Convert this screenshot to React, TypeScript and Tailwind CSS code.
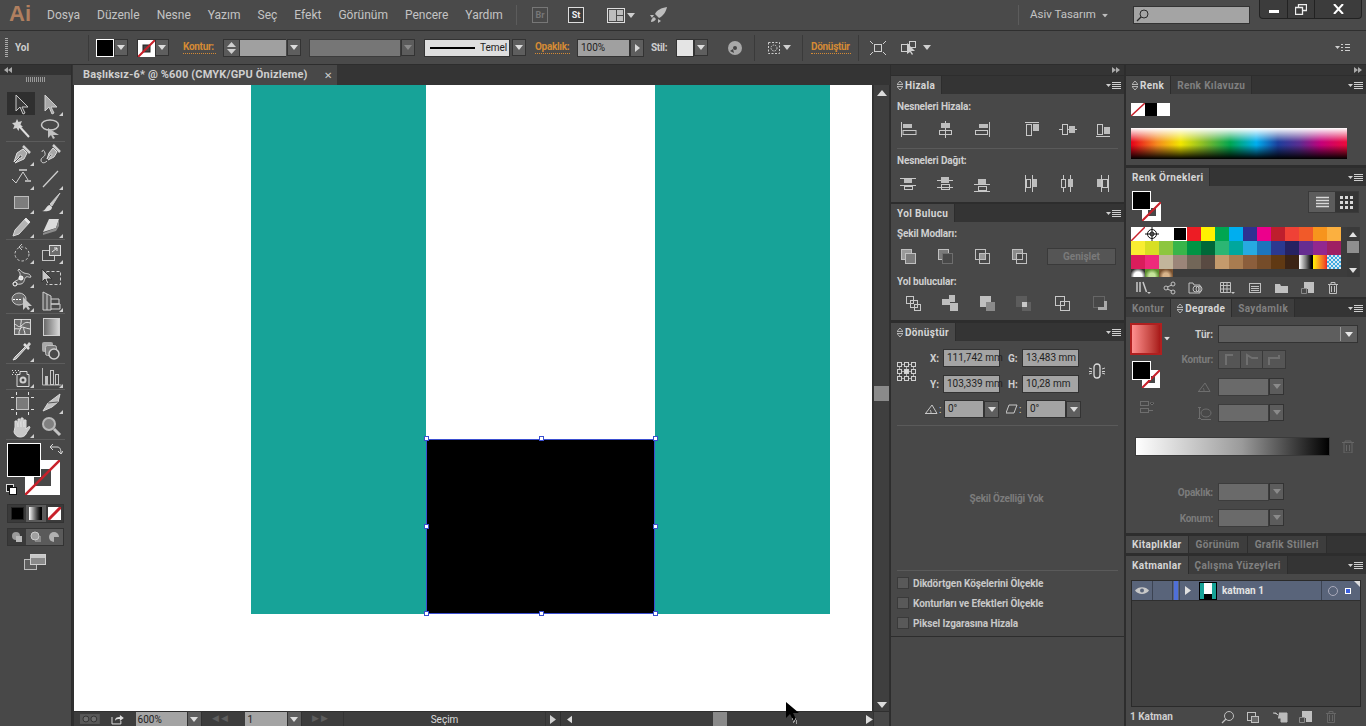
import React from 'react'

const Ico = ({
  w = 24,
  h = 24,
  c = '#c4c4c4',
  className = '',
  children,
}: {
  w?: number
  h?: number
  c?: string
  className?: string
  children?: React.ReactNode
}) => (
  <svg
    width={w}
    height={h}
    viewBox={`0 0 ${w} ${h}`}
    fill="none"
    stroke={c}
    strokeWidth={1}
    className={`block shrink-0 ${className}`}
  >
    {children}
  </svg>
)

const Caret = ({ c = '#d8d8d8', className = '' }: { c?: string; className?: string }) => (
  <svg width="8" height="5" viewBox="0 0 8 5" className={`block shrink-0 ${className}`}>
    <path d="M0 0h8L4 5z" fill={c} />
  </svg>
)

const PanelMenu = () => (
  <svg width="15" height="9" viewBox="0 0 15 9" className="block shrink-0">
    <path d="M0 3h5L2.500 6z" fill="#cfcfcf" />
    <path d="M6 1.500h9M6 3.500h9M6 5.500h9M6 7.500h9" stroke="#cfcfcf" strokeWidth="1" />
  </svg>
)

const Dd = ({ wide = 'w-[14px]', dim = false, cls = '' }: { wide?: string; dim?: boolean; cls?: string }) => (
  <div
    className={`${wide} ${cls} h-[17px] flex items-center justify-center border border-[#333] ${
      dim ? 'bg-[#5c5c5c]' : 'bg-[#5e5e5e]'
    }`}
  >
    <Caret c={dim ? '#8a8a8a' : '#dcdcdc'} />
  </div>
)

const NoStroke = ({ inner = true }: { inner?: boolean }) => (
  <svg width="17" height="17" viewBox="0 0 17 17" className="block">
    <rect x="0" y="0" width="17" height="17" fill="#fff" />
    {inner && <rect x="5" y="5" width="7" height="7" fill="#484848" stroke="#222" />}
    <path d="M0 17L17 0" stroke="#c8202a" strokeWidth="2" />
  </svg>
)

const ToolSep = () => <div className="mx-[6px] h-px bg-[#5c5c5c] mb-[1px]" />

const Corner = () => <path d="M24 23h-4l4-4z" fill="#cfcfcf" stroke="none" />

const tools: React.ReactNode[][] = [
  [
    <>
      <path d="M6 2v16l4-4 3 7 2-1-3-6h6z" fill="#3a3a3a" stroke="#c8c8c8" />
    </>,
    <>
      <path d="M6 2v16l4-4 3 7 2-1-3-6h6z" fill="#a8a8a8" stroke="#cfcfcf" />
      <Corner />
    </>,
  ],
  [
    <>
      <path d="M7 2l1.500 3 3.500-1-1.500 3.500 2.500 2.500-3.500 .5-1 3.500-2-3-3.500 1 1.500-3.500-2.500-2.500 3.500-.5z" fill="#d0d0d0" stroke="none" />
      <path d="M9 9l10 11" stroke="#dedede" strokeWidth="2" />
    </>,
    <>
      <ellipse cx="11" cy="8" rx="8.500" ry="5" stroke="#c8c8c8" strokeWidth="1.500" />
      <path d="M9 11v10l3-3 2 4 2-1-2-3h6z" fill="#c0c0c0" stroke="none" />
    </>,
  ],
  [
    <>
      <path d="M13 6l4 4-3 6-9 4 5-5a1.500 1.500 0 1 0-1-1l-5 5 3-9z" fill="#a8a8a8" stroke="#dcdcdc" />
      <path d="M13 3l7 7" stroke="#cfcfcf" strokeWidth="2.500" />
      <Corner />
    </>,
    <>
      <path d="M14 5l4 4-3 5-6 3 3-4a1 1 0 1 0-1-1l-3 4 2-6z" fill="#a8a8a8" stroke="#dcdcdc" />
      <path d="M14 2l7 7" stroke="#cfcfcf" strokeWidth="2.500" />
      <path d="M8 18c-3 3-6 2-6-1s5-3 4-7-3-3-3-1" stroke="#cfcfcf" />
    </>,
  ],
  [
    <>
      <path d="M2 12l4 4 7-11 5 8" stroke="#d0d0d0" />
      <path d="M9 3h8M15 14h6" stroke="#d0d0d0" strokeWidth="1.500" />
      <Corner />
    </>,
    <>
      <path d="M4 20L19 4" stroke="#cfcfcf" strokeWidth="1.200" />
      <Corner />
    </>,
  ],
  [
    <>
      <rect x="4.500" y="5.500" width="14" height="12" fill="#7d7d7d" stroke="#bcbcbc" />
      <Corner />
    </>,
    <>
      <path d="M21 2L11 13l2 2z" fill="#c8c8c8" stroke="#c8c8c8" />
      <path d="M3 20c4 0 4-6 8-6l2 2c0 4-5 5-10 4z" fill="#dcdcdc" stroke="none" />
      <Corner />
    </>,
  ],
  [
    <>
      <path d="M16 3l4 4-11 12-6 2 2-6z" fill="#b4b4b4" stroke="#d8d8d8" />
      <path d="M15 4l4 4" stroke="#e8e8e8" strokeWidth="2" />
      <Corner />
    </>,
    <>
      <path d="M10 4h10l-3 9-13 4z" fill="#dcdcdc" stroke="none" />
      <path d="M4 18l13-5 3-9v7l-3 5-13 4z" fill="#8c8c8c" stroke="none" />
      <Corner />
    </>,
  ],
  [
    <>
      <circle cx="12" cy="13" r="7" strokeDasharray="2.500 2" stroke="#c8c8c8" />
      <path d="M12 3l-3 3 3 3" stroke="#c8c8c8" />
      <Corner />
    </>,
    <>
      <rect x="3.500" y="9.500" width="12" height="10" stroke="#c4c4c4" />
      <rect x="10.500" y="4.500" width="11" height="10" fill="#6c6c6c" stroke="#dcdcdc" />
      <path d="M13 11l5-4M15 7h3v3" stroke="#e8e8e8" />
      <Corner />
    </>,
  ],
  [
    <>
      <path d="M3 19c2-5 6-2 7-8s-4-4-1-7c2 2 3 3 5 4 3 1 6 0 7 4-2 1-3-1-5 0s-1 6-5 7-5-1-8 0z" fill="#5a5a5a" stroke="#d0d0d0" />
      <circle cx="5" cy="19" r="2" fill="#484848" stroke="#fff" />
      <circle cx="11" cy="13" r="2" fill="#dcdcdc" stroke="#fff" />
      <Corner />
    </>,
    <>
      <rect x="7.500" y="6.500" width="14" height="13" stroke="#d0d0d0" strokeDasharray="3 2" />
      <path d="M3 4v13l3-3 2 5 2-1-2-4h5z" fill="#c8c8c8" stroke="#333" />
    </>,
  ],
  [
    <>
      <ellipse cx="9" cy="10" rx="7" ry="6" stroke="#c8c8c8" fill="#6a6a6a" />
      <path d="M3 10.500h9" stroke="#fff" strokeDasharray="2 1" />
      <path d="M13 8v13l3-3 2 3 2-1-2-3h4z" fill="#c8c8c8" stroke="none" />
      <Corner />
    </>,
    <>
      <path d="M4 3l8 4v14H4z" fill="#5e5e5e" stroke="#d0d0d0" />
      <path d="M8 5v16M12 10h8v5h-8M12 15h9v5h-9" stroke="#d0d0d0" />
      <Corner />
    </>,
  ],
  [
    <>
      <rect x="4.500" y="4.500" width="16" height="15" fill="#6a6a6a" stroke="#d4d4d4" />
      <path d="M4 9c4 1 4 4 7 2s4-5 9-3M11 4c1 3-1 5 0 7s-3 5-2 8M4 14c3-1 5 1 7-1s3 0 9 1M15 19c0-3-2-4-1-7" stroke="#e4e4e4" />
    </>,
    <>
      <defs>
        <linearGradient id="tg" x1="0" x2="1" y1="0" y2="0">
          <stop offset="0" stopColor="#666" />
          <stop offset="1" stopColor="#dadada" />
        </linearGradient>
      </defs>
      <rect x="4.500" y="3.500" width="16" height="17" fill="url(#tg)" stroke="#d0d0d0" />
    </>,
  ],
]

const toolsEnd: React.ReactNode[][] = [
  [
    <>
      <path d="M15 8L5 18l-2 3 3-1 10-11" fill="#b0b0b0" stroke="#e0e0e0" />
      <path d="M14 5l5 5" stroke="#e0e0e0" strokeWidth="2.500" />
      <path d="M16 7l3-4 2 2-3 4z" fill="#d0d0d0" stroke="none" />
      <Corner />
    </>,
    <>
      <rect x="3" y="3" width="11" height="10" rx="2" fill="#a8a8a8" stroke="none" />
      <rect x="6.500" y="6.500" width="11" height="10" rx="2" fill="#7a7a7a" stroke="#c0c0c0" />
      <circle cx="15" cy="15" r="5" fill="#4a4a4a" stroke="#d0d0d0" strokeWidth="1.500" />
    </>,
  ],
  [
    <>
      <path d="M2 5.500h1M5 5.500h1M8 5.500h1M3 7.500h1M6 7.500h1M2 9.500h1M5 9.500h1" stroke="#dcdcdc" />
      <path d="M10 6.500h7v3h2v12H7v-12h3z" fill="#4c4c4c" stroke="#d8d8d8" />
      <circle cx="13" cy="15" r="3.500" fill="#cfcfcf" stroke="none" />
      <circle cx="13" cy="15" r="1.500" fill="#444" stroke="none" />
      <Corner />
    </>,
    <>
      <path d="M3.500 3v17h19" stroke="#b8b8b8" />
      <rect x="6" y="11" width="3" height="9" fill="#c0c0c0" stroke="none" />
      <rect x="11.500" y="5.500" width="3" height="14" stroke="#c8c8c8" />
      <rect x="16.500" y="9.500" width="3" height="10" stroke="#c8c8c8" />
      <Corner />
    </>,
  ],
]

const toolsLast: React.ReactNode[][] = [
  [
    <>
      <rect x="6.500" y="6.500" width="12" height="12" fill="#7a7a7a" stroke="#c4c4c4" />
      <path d="M6.500 1v3M18.500 1v3M6.500 21v3M18.500 21v3M1 6.500h3M1 18.500h3M21 6.500h3M21 18.500h3" stroke="#e0e0e0" />
    </>,
    <>
      <path d="M21 3L9 12l-5 8 9-4 6-5z" fill="#c0c0c0" stroke="#d8d8d8" />
      <path d="M9 12l10-1" stroke="#555" />
      <Corner />
    </>,
  ],
  [
    <>
      <path d="M5 12V6l2 0 1 6V4h2l1 8V3h2l1 9V5h2v9c2-2 3-3 4-2 0 2-3 4-4 7-1 2-3 3-6 3-3 0-5-2-6-5z" fill="#c8c8c8" stroke="#dedede" />
      <Corner />
    </>,
    <>
      <circle cx="10" cy="9" r="6" fill="#808080" stroke="#b8b8b8" strokeWidth="2" />
      <path d="M15 14l6 6" stroke="#c4c4c4" strokeWidth="3" />
    </>,
  ],
]

const ToolRow = ({ icons, active = false }: { icons: React.ReactNode[]; active?: boolean }) => (
  <div className="flex h-[24px] pl-[10px]">
    <div className="w-[31px] -ml-[2px] pl-[2px] relative">
      {active && <div className="absolute -left-[1px] -top-[1px] w-[28px] h-[23px] bg-[#2f2f2f]" />}
      <Ico className="relative">{icons[0]}</Ico>
    </div>
    <Ico>{icons[1]}</Ico>
  </div>
)

const LeftTools = () => (
  <div className="w-[72px] shrink-0 bg-[#484848] border-r border-[#2d2d2d] flex flex-col">
    <div className="h-[10px] bg-[#333] flex items-center pl-[4px]">
      <svg width="8" height="6" viewBox="0 0 8 6">
        <path d="M4 0v6L0 3zM8 0v6L4 3z" fill="#aaa" />
      </svg>
    </div>
    <div className="h-[9px] flex items-center justify-center">
      <div className="w-[20px] h-[5px] bg-[repeating-linear-gradient(90deg,#9a9a9a_0,#9a9a9a_1px,transparent_1px,transparent_2px)]" />
    </div>
    <div className="h-[9px]" />
    <ToolRow icons={tools[0]} active />
    <ToolRow icons={tools[1]} />
    <ToolSep />
    <ToolRow icons={tools[2]} />
    <ToolRow icons={tools[3]} />
    <ToolRow icons={tools[4]} />
    <ToolRow icons={tools[5]} />
    <ToolSep />
    <ToolRow icons={tools[6]} />
    <ToolRow icons={tools[7]} />
    <ToolRow icons={tools[8]} />
    <ToolSep />
    <ToolRow icons={tools[9]} />
    <ToolRow icons={toolsEnd[0]} />
    <ToolSep />
    <ToolRow icons={toolsEnd[1]} />
    <ToolSep />
    <ToolRow icons={toolsLast[0]} />
    <ToolRow icons={toolsLast[1]} />
    <ToolSep />

    <div className="relative h-[58px]">
      <div className="absolute left-[25px] top-[19px] w-[35px] h-[35px]">
        <svg width="35" height="35" viewBox="0 0 35 35" className="block">
          <rect width="35" height="35" fill="#fff" />
          <rect x="9" y="9" width="17" height="17" fill="#484848" />
          <path d="M0 35L35 0" stroke="#c8202a" strokeWidth="2.500" />
        </svg>
      </div>
      <div className="absolute left-[7px] top-[2px] w-[34px] h-[34px] bg-black border border-white" />
      <svg width="14" height="14" viewBox="0 0 14 14" className="absolute left-[49px] top-[2px]">
        <path d="M1 4h7c3 0 4 2 4 7M1 4l3-3M1 4l3 3M12 11l-3-3M12 11l2-3" fill="none" stroke="#d8d8d8" />
      </svg>
      <svg width="11" height="11" viewBox="0 0 11 11" className="absolute left-[6px] top-[43px]">
        <rect x="0.500" y="0.500" width="7" height="7" fill="#111" stroke="#ddd" />
        <rect x="3.500" y="3.500" width="7" height="7" fill="#fff" stroke="#111" />
      </svg>
    </div>

    <div className="mx-[7px] mt-[5px] h-[19px] flex items-center bg-[#3a3a3a] border border-[#333]">
      <div className="w-[19px] h-full flex items-center justify-center">
        <div className="w-[13px] h-[13px] bg-black border border-[#222]" />
      </div>
      <div className="w-[20px] h-full flex items-center justify-center bg-[#5a5a5a]">
        <div className="w-[13px] h-[13px] bg-linear-to-r from-white to-black" />
      </div>
      <div className="w-[18px] h-full flex items-center justify-center">
        <svg width="13" height="13" viewBox="0 0 13 13">
          <rect width="13" height="13" fill="#fff" />
          <path d="M0 13L13 0" stroke="#c8202a" strokeWidth="3" />
        </svg>
      </div>
    </div>
    <div className="mx-[7px] mt-[5px] h-[18px] flex items-center bg-[#5a5a5a] border border-[#333]">
      <div className="w-[19px] h-full flex items-center justify-center bg-[#3a3a3a]">
        <svg width="12" height="12" viewBox="0 0 12 12">
          <circle cx="5" cy="5" r="4" fill="#9a9a9a" />
          <rect x="5" y="5" width="6" height="6" fill="#b8b8b8" />
        </svg>
      </div>
      <div className="w-[20px] h-full flex items-center justify-center">
        <svg width="12" height="12" viewBox="0 0 12 12">
          <rect x="5" y="5" width="6" height="6" fill="#888" />
          <circle cx="5" cy="5" r="4" fill="#a0a0a0" stroke="#ccc" />
        </svg>
      </div>
      <div className="w-[18px] h-full flex items-center justify-center">
        <svg width="12" height="12" viewBox="0 0 12 12">
          <circle cx="6" cy="6" r="5" fill="#b0b0b0" />
          <rect x="6" y="6" width="5" height="5" fill="#5a5a5a" />
        </svg>
      </div>
    </div>
    <div className="flex justify-center mt-[7px] -ml-[2px]">
      <svg width="24" height="17" viewBox="0 0 24 17">
        <rect x="1.500" y="6.500" width="12" height="10" fill="#5e5e5e" stroke="#bdbdbd" />
        <rect x="7.500" y="1.500" width="15" height="10" fill="#8a8a8a" stroke="#d0d0d0" />
        <rect x="8" y="2" width="14" height="3" fill="#c8c8c8" stroke="none" />
      </svg>
    </div>
  </div>
)

const MenuBar = () => (
  <div className="h-[31px] shrink-0 flex items-center bg-[#4a4a4a] border-b border-[#2f2f2f] text-[12px] text-[#c4c4c4]">
    <div className="ml-[9px] w-[38px] text-[22px] leading-none font-bold text-[#b07f5f] font-['Liberation_Sans',sans-serif] -mt-[2px]">
      Ai
    </div>
    <div className="flex gap-[17px] w-[469px]">
      <span>Dosya</span>
      <span>Düzenle</span>
      <span>Nesne</span>
      <span>Yazım</span>
      <span>Seç</span>
      <span>Efekt</span>
      <span>Görünüm</span>
      <span>Pencere</span>
      <span>Yardım</span>
    </div>
    <div className="w-px h-[20px] bg-[#5c5c5c]" />
    <div className="ml-[15px] w-[16px] h-[16px] border border-[#777] text-[9px] leading-[14px] text-center text-[#777] font-bold">
      Br
    </div>
    <div className="ml-[20px] w-[16px] h-[16px] border border-[#ddd] text-[9px] leading-[14px] text-center text-[#eee] font-bold bg-[#3c3c3c]">
      St
    </div>
    <svg width="18" height="15" viewBox="0 0 18 15" className="ml-[23px] block">
      <rect x="0.500" y="0.500" width="17" height="14" fill="#484848" stroke="#ddd" />
      <rect x="2" y="2" width="7" height="11" fill="#bdbdbd" />
      <rect x="10" y="2" width="6" height="5" fill="#bdbdbd" />
      <rect x="10" y="8" width="6" height="5" fill="#bdbdbd" />
    </svg>
    <Caret className="ml-[2px]" c="#cfcfcf" />
    <svg width="18" height="18" viewBox="0 0 18 18" className="ml-[15px] block">
      <path d="M17 1C11 2 7 4 5 8l4 4c4-2 7-6 8-11zM4 9L0 9l2 3zM8 13l0 4 3-2zM4 11c-2 1-3 3-3 5 2 0 4-1 5-3z" fill="#bdbdbd" />
    </svg>
    <div className="ml-auto flex items-center h-full">
      <div className="w-px h-[20px] bg-[#5c5c5c]" />
      <span className="ml-[11px] w-[62px] whitespace-nowrap text-[11.5px]">Asiv Tasarım</span>
      <Caret className="ml-[9px] scale-75" c="#bdbdbd" />
      <div className="ml-[24px] w-[117px] h-[18px] bg-[#a4a4a4] border border-[#333] flex items-center pl-[2px]">
        <svg width="13" height="13" viewBox="0 0 13 13">
          <circle cx="8" cy="5" r="4" fill="none" stroke="#2a2a2a" />
          <path d="M5 8l-4 4" stroke="#2a2a2a" strokeWidth="1.300" />
        </svg>
      </div>
      <div className="ml-[9px] mr-[4px] self-start w-[103px] h-[19px] flex bg-[#3c3c3c] border border-t-0 border-[#222] rounded-b-[4px]">
        <div className="w-[28px] flex items-center justify-center border-r border-[#222]">
          <div className="w-[10px] h-[3px] mt-[5px] bg-white" />
        </div>
        <div className="w-[27px] flex items-center justify-center border-r border-[#222]">
          <svg width="12" height="11" viewBox="0 0 12 11">
            <path d="M3.500 3V.5h8v6H8M.5 3.500h7v7h-7z" fill="none" stroke="#eee" strokeWidth="1.300" />
          </svg>
        </div>
        <div className="flex-1 flex items-center justify-center">
          <svg width="11" height="10" viewBox="0 0 11 10">
            <path d="M1 0l9 10M10 0L1 10" stroke="#fff" strokeWidth="2" />
          </svg>
        </div>
      </div>
    </div>
  </div>
)

const CtlSep = ({ cls }: { cls: string }) => <div className={`${cls} w-px h-[26px] bg-[#3a3a3a]`} />

const OrangeLabel = ({ cls, children }: { cls: string; children: React.ReactNode }) => (
  <span
    className={`${cls} text-[10px] leading-[12px] font-bold tracking-[-0.3px] whitespace-nowrap text-[#d58a35] border-b border-dotted border-[#d58a35]`}
  >
    {children}
  </span>
)

const ControlBar = () => (
  <div className="h-[34px] shrink-0 flex items-center bg-[#4a4a4a] border-b border-[#2d2d2d] text-[10px]">
    <div className="ml-[5px] w-[3px] h-[20px] bg-[repeating-linear-gradient(180deg,#aaa_0,#aaa_1px,transparent_1px,transparent_2px)]" />
    <span className="ml-[7px] w-[73px] font-bold text-[#cfcfcf]">Yol</span>
    <CtlSep cls="" />
    <div className="ml-[7px] w-[18px] h-[18px] bg-black border border-white" />
    <Dd />
    <div className="ml-[9px] w-[18px] h-[18px] border border-[#333]">
      <NoStroke />
    </div>
    <Dd />
    <OrangeLabel cls="ml-[14px] w-[33px]">Kontur:</OrangeLabel>
    <div className="ml-[7px] w-[17px] h-[18px] flex flex-col items-center justify-center gap-[2px] bg-[#5a5a5a] border border-[#333]">
      <svg width="9" height="5" viewBox="0 0 9 5"><path d="M0 5h9L4.500 0z" fill="#cfcfcf" /></svg>
      <svg width="9" height="5" viewBox="0 0 9 5"><path d="M0 0h9L4.500 5z" fill="#cfcfcf" /></svg>
    </div>
    <div className="w-[46px] h-[18px] bg-[#a0a0a0] border-y border-[#333]" />
    <Dd cls="ml-[1px]" />
    <div className="ml-[8px] w-[92px] h-[18px] bg-[#767676] border border-[#3c3c3c]" />
    <Dd wide="w-[14px]" dim />
    <div className="ml-[9px] w-[86px] h-[18px] bg-[#dedede] border border-[#333] flex items-center text-[10px] text-[#222] pl-[5px]">
      <div className="w-[45px] h-[2px] bg-black" />
      <span className="ml-[5px]">Temel</span>
    </div>
    <Dd cls="ml-[2px]" />
    <OrangeLabel cls="ml-[9px] w-[35px]">Opaklık:</OrangeLabel>
    <div className="ml-[7px] w-[53px] h-[18px] bg-[#a0a0a0] border border-[#333] text-[10px] leading-[16px] text-[#222] pl-[3px]">
      100%
    </div>
    <div className="w-[14px] h-[18px] bg-[#5e5e5e] border border-[#333] flex items-center justify-center">
      <svg width="5" height="8" viewBox="0 0 5 8"><path d="M0 0v8l5-4z" fill="#d8d8d8" /></svg>
    </div>
    <span className="ml-[7px] w-[20px] font-bold text-[#cfcfcf] tracking-[-0.3px]">Stil:</span>
    <div className="ml-[5px] w-[18px] h-[18px] bg-[#e4e4e4] border border-[#333]" />
    <Dd />
    <svg width="14" height="14" viewBox="0 0 14 14" className="ml-[20px] block">
      <circle cx="7" cy="7" r="7" fill="#a8a8a8" />
      <circle cx="7" cy="7" r="2" fill="#444" />
      <path d="M2 10l3-2 1 4z" fill="#444" />
    </svg>
    <CtlSep cls="ml-[12px]" />
    <svg width="14" height="14" viewBox="0 0 14 14" className="ml-[12px] block">
      <rect x="1.500" y="1.500" width="11" height="11" fill="none" stroke="#cfcfcf" strokeDasharray="2 1.500" />
      <circle cx="7" cy="7" r="3" fill="none" stroke="#cfcfcf" strokeDasharray="1.500 1" />
    </svg>
    <Caret className="ml-[2px]" c="#d0d0d0" />
    <CtlSep cls="ml-[11px]" />
    <OrangeLabel cls="ml-[8px] w-[40px]">Dönüştür</OrangeLabel>
    <CtlSep cls="ml-[7px]" />
    <svg width="16" height="14" viewBox="0 0 16 14" className="ml-[11px] block">
      <rect x="4.500" y="3.500" width="7" height="7" fill="none" stroke="#cfcfcf" />
      <path d="M0 0l3 3M16 0l-3 3M0 14l3-3M16 14l-3-3" stroke="#cfcfcf" />
    </svg>
    <svg width="17" height="15" viewBox="0 0 17 15" className="ml-[14px] block">
      <rect x="1.500" y="4.500" width="7" height="7" fill="none" stroke="#cfcfcf" />
      <rect x="9.500" y="1.500" width="6" height="6" fill="none" stroke="#cfcfcf" />
      <path d="M7 3v11l3-2 2 3 1-1-2-3h4z" fill="#cfcfcf" />
    </svg>
    <Caret className="ml-[6px]" c="#d0d0d0" />
    <div className="ml-auto mr-[16px]">
      <svg width="15" height="9" viewBox="0 0 15 9" className="block">
        <path d="M0 3h5L2.500 6z" fill="#cfcfcf" />
        <path d="M6 1.500h2M10 1.500h5M6 4.500h2M10 4.500h5M6 7.500h2M10 7.500h5" stroke="#cfcfcf" />
      </svg>
    </div>
  </div>
)

const Canvas = () => (
  <div className="relative flex-1 bg-white overflow-hidden">
    {/* artboard objects, coordinates are relative to the canvas */}
    <div className="absolute left-[177px] top-0 w-[175px] h-[529px] bg-[#17a398]" />
    <div className="absolute left-[581px] top-0 w-[175px] h-[529px] bg-[#17a398]" />
    <div className="absolute left-[352px] top-[354px] w-[229px] h-[175px] bg-black border border-[#3b4fd0]" />
    {[
      'left-[350px] top-[351px]',
      'left-[465px] top-[351px]',
      'left-[579px] top-[351px]',
      'left-[350px] top-[439px]',
      'left-[579px] top-[439px]',
      'left-[350px] top-[526px]',
      'left-[465px] top-[526px]',
      'left-[579px] top-[526px]',
    ].map((pos) => (
      <div key={pos} className={`absolute ${pos} w-[5px] h-[5px] bg-white border border-[#3b4fd0]`} />
    ))}
  </div>
)

const DocArea = () => (
  <div className="w-[818px] shrink-0 flex flex-col bg-[#2f2f2f] relative">
    <div className="h-[20px] flex bg-[#343434]">
      <div className="ml-[1px] w-[264px] bg-[#484848] flex items-center pl-[10px] text-[11px] font-bold text-[#cfcfcf] tracking-[0.15px] whitespace-nowrap">
        <span className="w-[238px] overflow-hidden">Başlıksız-6* @ %600 (CMYK/GPU Önizleme)</span>
        <span className="ml-[3px] text-[10px] font-normal text-[#ccc]">✕</span>
      </div>
    </div>
    <div className="flex-1 flex min-h-0">
      <div className="w-[2px] bg-[#2f2f2f]" />
      <div className="flex-1 flex flex-col min-w-0">
        <div className="flex-1 flex min-h-0">
          <Canvas />
          <div className="w-[16px] ml-[1px] bg-[#3f3f3f] border-l border-[#333] flex flex-col items-center">
            <svg width="10" height="6" viewBox="0 0 10 6" className="mt-[5px]"><path d="M0 6h10L5 0z" fill="#dcdcdc" /></svg>
            <div className="mt-[290px] w-full h-[15px] bg-[#8a8a8a]" />
            <svg width="10" height="6" viewBox="0 0 10 6" className="mt-auto mb-[3px]"><path d="M0 0h10L5 6z" fill="#dcdcdc" /></svg>
          </div>
        </div>
        <div className="h-[15px] flex items-center bg-[#3d3d3d] border-t border-[#2f2f2f] text-[10px] text-[#222]">
          <svg width="20" height="10" viewBox="0 0 20 10" className="ml-[6px]">
            <rect width="20" height="10" fill="#585858" />
            <circle cx="6" cy="5" r="3" fill="#6e6e6e" stroke="#333" />
            <circle cx="14" cy="5" r="3" fill="#6e6e6e" stroke="#333" />
          </svg>
          <svg width="13" height="11" viewBox="0 0 13 11" className="ml-[11px]">
            <path d="M1 3v7h9V7" fill="none" stroke="#ddd" />
            <path d="M4 7c0-3 2-4 5-4V1l4 3-4 3V5c-2 0-4 0-5 2z" fill="#ddd" />
          </svg>
          <div className="ml-[12px] w-[52px] h-[14px] bg-[#a4a4a4] leading-[15px] pl-[2px]">600%</div>
          <Dd wide="w-[15px]" />
          <span className="ml-[10px] w-[30px] text-[9px] text-[#5e5e5e] tracking-[2px]">◀◀</span>
          <div className="ml-[4px] w-[42px] h-[14px] bg-[#a4a4a4] leading-[15px] pl-[2px]">1</div>
          <Dd wide="w-[15px]" />
          <span className="ml-[10px] w-[28px] text-[9px] text-[#5e5e5e] tracking-[2px]">▶▶</span>
          <div className="ml-[4px] w-[205px] h-full border-x border-[#333] flex items-center justify-center text-[#dcdcdc]">
            Seçim
          </div>
          <div className="w-[14px] h-full flex items-center justify-center">
            <svg width="6" height="9" viewBox="0 0 6 9"><path d="M0 0v9l6-4.500z" fill="#cfcfcf" /></svg>
          </div>
          <div className="w-px h-full bg-[#2f2f2f]" />
          <svg width="6" height="9" viewBox="0 0 6 9" className="ml-[6px]"><path d="M6 0v9L0 4.500z" fill="#dcdcdc" /></svg>
          <div className="ml-[141px] w-[14px] h-full bg-[#8a8a8a]" />
          <svg width="7" height="9" viewBox="0 0 7 9" className="ml-[139px]"><path d="M0 0v9l7-4.500z" fill="#dcdcdc" /></svg>
          <div className="ml-auto w-[16px] h-full bg-[#484848] border-l border-[#333]" />
        </div>
      </div>
      <div className="w-[1px] bg-[#2f2f2f]" />
    </div>
  </div>
)

const PanelHead = ({ tabs, active = 0, arrows = [] as number[] }: { tabs: string[]; active?: number; arrows?: number[] }) => (
  <div className="h-[18px] shrink-0 flex items-stretch bg-[#343434]">
    {tabs.map((t, i) => (
      <div
        key={t}
        className={`px-[6px] flex items-center gap-[2px] text-[10px] font-bold tracking-[0.35px] whitespace-nowrap border-r border-[#2d2d2d] ${
          i === active ? 'bg-[#484848] text-[#d6d6d6]' : 'bg-[#3d3d3d] text-[#808080]'
        }`}
      >
        {arrows.includes(i) && (
          <svg width="6" height="9" viewBox="0 0 6 9" className="block">
            <path d="M3 0l3 3.500H0zM3 9L0 5.500h6z" fill="none" stroke="#cfcfcf" strokeWidth="0.800" />
          </svg>
        )}
        {t}
      </div>
    ))}
    <div className="ml-auto self-center mr-[3px]">
      <PanelMenu />
    </div>
  </div>
)

const Strip = () => (
  <div className="h-[10px] shrink-0 bg-[#343434] flex items-center justify-end pr-[4px]">
    <svg width="8" height="6" viewBox="0 0 8 6">
      <path d="M0 0v6l4-3zM4 0v6l4-3z" fill="#aaa" />
    </svg>
  </div>
)

const SectionLabel = ({ children, cls = '' }: { children: React.ReactNode; cls?: string }) => (
  <div className={`${cls} text-[10px] font-bold leading-[12px] text-[#cfcfcf] tracking-[-0.15px]`}>{children}</div>
)

const A = ({ children }: { children: React.ReactNode }) => (
  <Ico w={20} h={20} c="#c8c8c8">
    {children}
  </Ico>
)
const F = '#bdbdbd'

const alignIcons = [
  <><path d="M3.500 3v15" /><rect x="5" y="5" width="9" height="4" fill={F} stroke="none" /><rect x="5" y="11.500" width="13" height="4" /></>,
  <><path d="M10.500 2v17" /><rect x="6" y="4" width="9" height="5" fill={F} stroke="none" /><rect x="4.500" y="11.500" width="12" height="4" /></>,
  <><path d="M17.500 3v15" /><rect x="7" y="5" width="9" height="4" fill={F} stroke="none" /><rect x="3.500" y="11.500" width="12" height="4" /></>,
  <><path d="M3 3.500h14" /><rect x="4.500" y="5.500" width="5" height="11" /><rect x="11" y="5" width="6" height="7" fill={F} stroke="none" /></>,
  <><path d="M2 10.500h18" /><rect x="5.500" y="5.500" width="5" height="10" fill="#484848" /><rect x="12" y="7" width="6" height="7" fill={F} stroke="none" /></>,
  <><path d="M3 17.500h14" /><rect x="4.500" y="5.500" width="5" height="10" /><rect x="11" y="8" width="6" height="7" fill={F} stroke="none" /></>,
]
const distIcons = [
  <><path d="M2 5.500h16M2 12.500h16" /><rect x="6" y="6" width="8" height="4" fill={F} stroke="none" /><rect x="6.500" y="13.500" width="8" height="3" /></>,
  <><path d="M2 7.500h16M2 14.500h16" /><rect x="6" y="4" width="8" height="6" fill={F} stroke="none" /><rect x="6.500" y="11.500" width="8" height="5" /></>,
  <><path d="M2 11.500h16M2 18.500h16" /><rect x="6" y="6" width="8" height="5" fill={F} stroke="none" /><rect x="6.500" y="13.500" width="8" height="4" /></>,
  <><path d="M3.500 2v17M10.500 2v17" /><rect x="4.500" y="6.500" width="4" height="8" /><rect x="11" y="6" width="4" height="8" fill={F} stroke="none" /></>,
  <><path d="M6.500 2v17M13.500 2v17" /><rect x="4.500" y="6.500" width="4" height="8" fill="#484848" /><rect x="11" y="6" width="5" height="8" fill={F} stroke="none" /></>,
  <><path d="M8.500 2v17M15.500 2v17" /><rect x="4" y="6" width="4" height="8" fill={F} stroke="none" /><rect x="9.500" y="6.500" width="5" height="8" /></>,
]
const shapeIcons = [
  <><rect x="3.500" y="3.500" width="10" height="10" fill="#9a9a9a" stroke="#c0c0c0" /><rect x="7.500" y="7.500" width="10" height="10" fill="#7c7c7c" stroke="#c0c0c0" /></>,
  <><rect x="3.500" y="3.500" width="10" height="10" fill="#7a7a7a" stroke="#c0c0c0" /><rect x="7.500" y="7.500" width="10" height="10" fill="#484848" stroke="#6e6e6e" /></>,
  <><rect x="3.500" y="3.500" width="10" height="10" stroke="#c0c0c0" /><rect x="8" y="8" width="5" height="5" fill="#999" stroke="none" /><rect x="7.500" y="7.500" width="10" height="10" stroke="#c0c0c0" /></>,
  <><rect x="3.500" y="3.500" width="10" height="10" fill="#8a8a8a" stroke="#c0c0c0" /><rect x="8" y="8" width="5" height="5" fill="#484848" stroke="none" /><rect x="7.500" y="7.500" width="10" height="10" fill="none" stroke="#c0c0c0" /></>,
]
const finderIcons = [
  <><rect x="3.500" y="3.500" width="7" height="7" /><rect x="7.500" y="7.500" width="7" height="7" /><rect x="11.500" y="11.500" width="6" height="6" /></>,
  <><rect x="9" y="2" width="6" height="7" fill={F} stroke="none" /><rect x="2" y="6" width="8" height="6" fill={F} stroke="none" /><rect x="10" y="10" width="8" height="8" fill={F} stroke="none" /></>,
  <><rect x="3" y="3" width="11" height="11" fill="#c0c0c0" stroke="none" /><rect x="9" y="9" width="9" height="9" fill="#8a8a8a" stroke="none" /></>,
  <><rect x="3" y="3" width="11" height="11" fill="#5c5c5c" stroke="none" /><rect x="9" y="9" width="9" height="9" fill="#606060" stroke="none" /><rect x="9" y="9" width="5" height="5" fill="#c8c8c8" stroke="none" /></>,
  <><rect x="3.500" y="3.500" width="9" height="9" /><rect x="8.500" y="8.500" width="9" height="9" /><rect x="8.500" y="8.500" width="4" height="4" fill="#484848" /></>,
  <><rect x="3.500" y="3.500" width="11" height="11" stroke="#666" /><path d="M14 8h3v9H8v-3h6z" fill="#aaa" stroke="none" /></>,
]

const IconRow = ({ icons, gaps, cls }: { icons: React.ReactNode[]; gaps: string[]; cls?: string }) => (
  <div className={`flex ${cls}`}>
    {icons.map((ic, i) => (
      <div key={i} className={gaps[i]}>
        <A>{ic}</A>
      </div>
    ))}
  </div>
)

const alignGaps = ['ml-[7px]', 'ml-[17px]', 'ml-[17px]', 'ml-[30px]', 'ml-[15px]', 'ml-[16px]']

const Field = ({ w, children }: { w: string; children: React.ReactNode }) => (
  <div className={`${w} h-[18px] bg-[#a4a4a4] border border-[#333] text-[10px] font-normal leading-[16px] text-[#1f1f1f] pl-[3px] whitespace-nowrap`}>
    {children}
  </div>
)

const Check = ({ label }: { label: string }) => (
  <div className="flex items-center h-[20px] pl-[6px] text-[10px] text-[#c8c8c8] font-bold tracking-[-0.1px]">
    <div className="w-[12px] h-[12px] bg-[#595959] border border-[#3a3a3a]" />
    <span className="ml-[4px]">{label}</span>
  </div>
)

const RefGrid = () => (
  <svg width="19" height="19" viewBox="0 0 19 19" className="block">
    {[0, 7, 14].map((y) =>
      [0, 7, 14].map((x) => (
        <rect
          key={`${x}-${y}`}
          x={x + 0.5}
          y={y + 0.5}
          width="4"
          height="4"
          fill={x === 7 && y === 7 ? '#d8d8d8' : 'none'}
          stroke="#d0d0d0"
        />
      )),
    )}
    <path d="M5 2.500h2M12 2.500h2M5 9.500h2M12 9.500h2M5 16.500h2M12 16.500h2M2.500 5v2M9.500 5v2M16.500 5v2M2.500 12v2M9.500 12v2M16.500 12v2" stroke="#aaa" />
  </svg>
)

const ColumnOne = () => (
  <div className="w-[233px] shrink-0 flex flex-col bg-[#2d2d2d] ml-[1px]">
    <Strip />
    <div className="h-[1px]" />
    <PanelHead tabs={['Hizala']} arrows={[0]} />
    <div className="h-[108px] shrink-0 bg-[#484848]">
      <SectionLabel cls="pt-[7px] pl-[6px]">Nesneleri Hizala:</SectionLabel>
      <IconRow icons={alignIcons} gaps={alignGaps} cls="mt-[6px]" />
      <div className="mx-[6px] mt-[9px] h-px bg-[#5a5a5a]" />
      <SectionLabel cls="pt-[6px] pl-[6px]">Nesneleri Dağıt:</SectionLabel>
      <IconRow icons={distIcons} gaps={alignGaps} cls="mt-[6px]" />
    </div>
    <div className="h-[2px]" />
    <PanelHead tabs={['Yol Bulucu']} />
    <div className="h-[98px] shrink-0 bg-[#484848]">
      <SectionLabel cls="pt-[6px] pl-[6px]">Şekil Modları:</SectionLabel>
      <div className="flex items-center mt-[6px]">
        <IconRow icons={shapeIcons} gaps={['ml-[7px]', 'ml-[17px]', 'ml-[17px]', 'ml-[17px]']} />
        <div className="ml-[18px] w-[69px] h-[17px] bg-[#555] border border-[#3a3a3a] text-[10px] leading-[15px] text-center text-[#7a7a7a] font-bold">
          Genişlet
        </div>
      </div>
      <SectionLabel cls="pt-[10px] pl-[6px]">Yol bulucular:</SectionLabel>
      <IconRow icons={finderIcons} gaps={['ml-[12px]', 'ml-[17px]', 'ml-[17px]', 'ml-[16px]', 'ml-[19px]', 'ml-[18px]']} cls="mt-[5px]" />
    </div>
    <div className="h-[3px]" />
    <PanelHead tabs={['Dönüştür']} arrows={[0]} />
    <div className="flex-1 bg-[#484848] flex flex-col">
      <div className="flex items-center mt-[8px] pl-[6px] text-[10px] font-bold text-[#cfcfcf]">
        <div className="w-[19px] mr-[14px]"><RefGrid /></div>
        <div className="w-[155px] flex flex-col gap-[8px]">
          <div className="flex items-center">
            <span className="w-[9px]">X:</span>
            <span className="w-[4px]" />
            <Field w="w-[57px]">111,742 mm</Field>
            <span className="ml-[8px] w-[14px]">G:</span>
            <Field w="w-[57px]">13,483 mm</Field>
          </div>
          <div className="flex items-center">
            <span className="w-[9px]">Y:</span>
            <span className="w-[4px]" />
            <Field w="w-[57px]">103,339 mm</Field>
            <span className="ml-[8px] w-[14px]">H:</span>
            <Field w="w-[57px]">10,28 mm</Field>
          </div>
        </div>
        <svg width="18" height="16" viewBox="0 0 18 16" className="ml-[3px]">
          <rect x="6" y="1" width="6" height="14" rx="3" fill="none" stroke="#dcdcdc" strokeWidth="1.300" />
          <path d="M1 5l3 1M1 8.500h3M1 11l3-1M17 5l-3 1M17 8.500h-3M17 11l-3-1" stroke="#cfcfcf" />
        </svg>
      </div>
      <div className="flex items-center mt-[7px] text-[10px] text-[#cfcfcf]">
        <svg width="13" height="10" viewBox="0 0 13 10" className="ml-[34px]">
          <path d="M0 9.500h12L7 1 .5 9.500M5 6c1 1 1 2 1 3.500" fill="none" stroke="#c8c8c8" />
        </svg>
        <span className="w-[5px] ml-[1px]">:</span>
        <Field w="w-[40px]">0°</Field>
        <Dd wide="w-[15px]" />
        <svg width="12" height="10" viewBox="0 0 12 10" className="ml-[7px]">
          <path d="M3 1h8L8 9H0z" fill="none" stroke="#c8c8c8" />
        </svg>
        <span className="w-[7px] ml-[1px]">:</span>
        <Field w="w-[40px]">0°</Field>
        <Dd wide="w-[15px]" />
      </div>
      <div className="mx-[6px] mt-[7px] h-px bg-[#5a5a5a]" />
      <div className="h-[144px] flex items-center justify-center text-[10px] font-bold text-[#7c7c7c] tracking-[-0.2px] -translate-x-[1px]">
        Şekil Özelliği Yok
      </div>
      <div className="mx-[6px] h-px bg-[#5a5a5a]" />
      <div className="mt-[2px]">
        <Check label="Dikdörtgen Köşelerini Ölçekle" />
        <Check label="Konturları ve Efektleri Ölçekle" />
        <Check label="Piksel Izgarasına Hizala" />
      </div>
      <div className="mt-[3px] h-px bg-[#2d2d2d]" />
    </div>
  </div>
)

const swatchCells = [
  'none', 'reg', 'bg-white', 'blk', 'bg-[#ed1c24]', 'bg-[#fff200]', 'bg-[#00a651]', 'bg-[#00aeef]', 'bg-[#2e3192]', 'bg-[#ec008c]', 'bg-[#be1e2d]', 'bg-[#ef4136]', 'bg-[#f15a29]', 'bg-[#f7941d]', 'bg-[#fbb040]',
  'bg-[#f9ed32]', 'bg-[#d7df23]', 'bg-[#8dc63f]', 'bg-[#39b54a]', 'bg-[#009444]', 'bg-[#006838]', 'bg-[#2bb673]', 'bg-[#00a79d]', 'bg-[#27aae1]', 'bg-[#1c75bc]', 'bg-[#2b3990]', 'bg-[#262262]', 'bg-[#662d91]', 'bg-[#92278f]', 'bg-[#9e1f63]',
  'bg-[#da1c5c]', 'bg-[#ee2a7b]', 'bg-[#c2b59b]', 'bg-[#9b8579]', 'bg-[#726658]', 'bg-[#594a42]', 'bg-[#c49a6c]', 'bg-[#a97c50]', 'bg-[#8b5e3c]', 'bg-[#754c29]', 'bg-[#603913]', 'bg-[#3c2415]', 'bg-linear-to-r from-white via-[#777] to-black', 'bg-linear-to-r from-[#fff200] via-[#f7941d] to-[#ed1c24]', 'bg-[repeating-conic-gradient(#3fa9e0_0_25%,#d8e8f2_0_50%)] bg-[length:4px_4px]',
  'bg-[radial-gradient(circle,#fff_40%,#333_80%)]', 'bg-[radial-gradient(circle,#c5e39a_30%,#5c8f2e_70%)]', 'bg-[radial-gradient(circle,#d8b48a_30%,#7a5230_70%)]',
]

const Swatch = ({ s }: { s: string }) => {
  if (s === 'none')
    return (
      <svg width="14" height="14" viewBox="0 0 14 14" className="block">
        <rect width="14" height="14" fill="#fff" />
        <path d="M0 14L14 0" stroke="#c8202a" strokeWidth="1.500" />
      </svg>
    )
  if (s === 'reg')
    return (
      <svg width="14" height="14" viewBox="0 0 14 14" className="block">
        <rect width="14" height="14" fill="#fff" />
        <circle cx="7" cy="7" r="4.500" fill="none" stroke="#111" />
        <circle cx="7" cy="7" r="2" fill="none" stroke="#111" />
        <path d="M7 0v14M0 7h14" stroke="#111" />
      </svg>
    )
  if (s === 'blk') return <div className="w-[14px] h-[14px] bg-black border border-white" />
  return <div className={`w-[14px] h-[14px] ${s}`} />
}

const Foot = ({ children, cls = '' }: { children: React.ReactNode; cls?: string }) => (
  <Ico w={16} h={14} c="#c0c0c0" className={cls}>
    {children}
  </Ico>
)

const SwatchFooter = () => (
  <div className="flex items-center h-[20px] mt-[1px] pl-[9px]">
    <Foot><path d="M2 1v10M5 1v10M8 1l3.500 10" stroke="#c8c8c8" strokeWidth="1.500" /><path d="M12 11h4l-2 2z" fill="#c8c8c8" stroke="none" /></Foot>
    <Foot cls="ml-[11px]"><circle cx="4" cy="7" r="2" /><circle cx="11" cy="3" r="2" /><circle cx="11" cy="11" r="2" /><path d="M5 6l5-2M5 8l5 2" /></Foot>
    <Foot cls="ml-[10px]"><path d="M1 2h4l1 2h6v8H1z" /><circle cx="8" cy="8" r="3" /><circle cx="11" cy="8" r="3" /></Foot>
    <Foot cls="ml-[15px]"><path d="M1.500 1.500h10v10h-10zM4.500 1.500v10M8 1.500v10M1.500 4.500h10M1.500 8h10" /><path d="M12 11h4l-2 2z" fill="#c8c8c8" stroke="none" /></Foot>
    <Foot cls="ml-[12px]"><rect x="2.500" y="2.500" width="11" height="9" /><path d="M4 5.500h8M4 7.500h8M4 9.500h8" /></Foot>
    <Foot cls="ml-[11px]"><path d="M1 3h5l1 2h7v7H1z" fill="#c0c0c0" stroke="none" /></Foot>
    <Foot cls="ml-[10px]"><path d="M4 1h10v11H8V8H4z" fill="#c0c0c0" stroke="none" /><path d="M1.500 7.500h5v5h-5z" stroke="#888" /></Foot>
    <Foot cls="ml-[9px]"><path d="M3 3.500h10M6 3V1.500h4V3M4.500 3.500v9h7v-9M6.500 5v6M9.500 5v6" /></Foot>
  </div>
)

const Corners = () => (
  <div className="absolute right-[3px] bottom-[3px] w-[8px] h-[8px] bg-[radial-gradient(#9a9a9a_40%,transparent_45%)] bg-[length:2px_2px]" />
)

const DisabledDd = ({ w = 'w-[51px]' }: { w?: string }) => (
  <div className="flex">
    <div className={`${w} h-[18px] bg-[#6a6a6a] border border-[#3c3c3c]`} />
    <Dd wide="w-[15px]" dim />
  </div>
)

const DimLabel = ({ cls = '', children }: { cls?: string; children: React.ReactNode }) => (
  <span className={`${cls} text-[10px] font-bold text-[#7c7c7c] text-right tracking-[-0.2px]`}>{children}</span>
)

const ColumnTwo = () => (
  <div className="flex-1 flex flex-col bg-[#2d2d2d] ml-[2px] min-w-0">
    <Strip />
    <div className="h-[1px]" />
    <PanelHead tabs={['Renk', 'Renk Kılavuzu']} arrows={[0]} />
    <div className="relative h-[71px] shrink-0 bg-[#484848] pt-[9px]">
      <div className="flex ml-[5px]">
        <svg width="14" height="13" viewBox="0 0 14 13" className="block">
          <rect width="14" height="13" fill="#fff" />
          <path d="M0 13L14 0" stroke="#c8202a" strokeWidth="1.500" />
        </svg>
        <div className="w-[12px] h-[13px] bg-black" />
        <div className="w-[13px] h-[13px] bg-white" />
      </div>
      <div className="relative ml-[5px] mt-[12px] w-[216px] h-[31px] bg-[linear-gradient(90deg,#e6001a_0%,#f58a1f_12%,#f2e600_23%,#7ab82d_35%,#00a651_46%,#00aeef_58%,#1c3f9c_68%,#5b2d91_78%,#c4007a_88%,#ed0a3a_100%)]">
        <div className="absolute inset-0 bg-[linear-gradient(180deg,#fff_0%,transparent_45%,transparent_55%,#000_100%)]" />
      </div>
      <Corners />
    </div>
    <div className="h-[3px]" />
    <PanelHead tabs={['Renk Örnekleri']} />
    <div className="relative h-[111px] shrink-0 bg-[#484848]">
      <div className="flex items-start mt-0 pt-[5px] pl-[6px]">
        <div className="relative w-[30px] h-[30px]">
          <div className="absolute left-[10px] top-[11px] w-[19px] h-[19px] overflow-hidden">
            <svg width="19" height="19" viewBox="0 0 19 19" className="block">
              <rect width="19" height="19" fill="#fff" />
              <rect x="6" y="6" width="8" height="8" fill="#484848" />
              <path d="M0 19L19 0" stroke="#c8202a" strokeWidth="2" />
            </svg>
          </div>
          <div className="absolute left-0 top-0 w-[19px] h-[19px] bg-black border border-white" />
        </div>
        <div className="ml-auto mr-[7px] flex h-[22px] w-[51px] bg-[#353535] border border-[#3a3a3a]">
          <div className="w-[26px] bg-[#5c5c5c] flex items-center justify-center">
            <svg width="13" height="12" viewBox="0 0 13 12"><path d="M0 1.500h13M0 4.500h13M0 7.500h13M0 10.500h13" stroke="#d8d8d8" strokeWidth="1.300" /></svg>
          </div>
          <div className="flex-1 flex items-center justify-center">
            <svg width="13" height="13" viewBox="0 0 13 13">
              <path d="M0 0h3v3H0zM5 0h3v3H5zM10 0h3v3h-3zM0 5h3v3H0zM5 5h3v3H5zM10 5h3v3h-3zM0 10h3v3H0zM5 10h3v3H5zM10 10h3v3h-3z" fill="#d8d8d8" />
            </svg>
          </div>
        </div>
      </div>
      <div className="flex ml-[5px] mt-[6px] h-[50px] w-[229px] bg-[#3c3c3c]">
        <div className="grid grid-cols-[repeat(15,14px)] auto-rows-[14px] h-[50px] overflow-hidden">
          {swatchCells.map((s, i) => (
            <Swatch key={i} s={s} />
          ))}
        </div>
        <div className="ml-auto w-[12px] mr-[1px] flex flex-col items-center bg-[#3a3a3a]">
          <svg width="8" height="5" viewBox="0 0 8 5" className="mt-[5px]"><path d="M0 5h8L4 0z" fill="#e0e0e0" /></svg>
          <div className="mt-[4px] w-full h-[12px] bg-[#8f8f8f]" />
          <svg width="8" height="5" viewBox="0 0 8 5" className="mt-auto mb-[4px]"><path d="M0 0h8L4 5z" fill="#e0e0e0" /></svg>
        </div>
      </div>
      <SwatchFooter />
      <Corners />
    </div>
    <div className="h-[2px]" />
    <PanelHead tabs={['Kontur', 'Degrade', 'Saydamlık']} active={1} arrows={[1]} />
    <div className="relative h-[216px] shrink-0 bg-[#484848]">
      <div className="absolute left-[4px] top-[6px] w-[32px] h-[32px] bg-linear-to-r from-[#ff8f8f] to-[#a81818] border-2 border-[#b02020]" />
      <Caret className="absolute left-[37px] top-[19px] scale-75" c="#ddd" />
      <div className="absolute left-[16px] top-[53px] w-[18px] h-[18px]">
        <svg width="18" height="18" viewBox="0 0 18 18" className="block">
          <rect width="18" height="18" fill="#fff" />
          <rect x="6" y="6" width="7" height="7" fill="#484848" />
          <path d="M0 18L18 0" stroke="#c8202a" strokeWidth="2" />
        </svg>
      </div>
      <div className="absolute left-[6px] top-[44px] w-[19px] h-[19px] bg-black border border-white" />
      <svg width="16" height="14" viewBox="0 0 16 14" className="absolute left-[13px] top-[83px]">
        <rect x="1.500" y="1.500" width="8" height="4" fill="none" stroke="#6e6e6e" />
        <rect x="1.500" y="8.500" width="8" height="4" fill="none" stroke="#6e6e6e" />
        <path d="M11 3h4l-2 2zM10 10.500h4" stroke="#6e6e6e" />
      </svg>

      <div className="flex items-center pt-[8px]">
        <span className="w-[87px] text-right text-[10px] font-bold text-[#cfcfcf]">Tür:</span>
        <div className="ml-[5px] w-[140px] h-[18px] bg-[#5e5e5e] border border-[#333] flex items-center justify-end">
          <div className="w-px h-[14px] bg-[#999]" />
          <Caret className="mx-[4px]" c="#e8e8e8" />
        </div>
      </div>
      <div className="flex items-center mt-[7px]">
        <DimLabel cls="w-[87px]">Kontur:</DimLabel>
        <div className="ml-[5px] flex h-[19px] border border-[#3a3a3a] bg-[#555]">
          {['M5 14V4h7', 'M4 14V4l5 3h6', 'M4 14V7h10V4'].map((d, i) => (
            <div key={d} className={`w-[22px] flex items-center justify-center ${i < 2 ? 'border-r border-[#3a3a3a]' : ''}`}>
              <svg width="18" height="17" viewBox="0 0 18 17"><path d={d} fill="none" stroke="#6f6f6f" strokeWidth="2" /></svg>
            </div>
          ))}
        </div>
      </div>
      <div className="flex items-center mt-[9px] pl-[72px]">
        <svg width="13" height="10" viewBox="0 0 13 10" className="mr-[7px]">
          <path d="M0 9.500h12L7 1 .5 9.500M5 6c1 1 1 2 1 3.500" fill="none" stroke="#6e6e6e" />
        </svg>
        <DisabledDd />
      </div>
      <div className="flex items-center mt-[8px] pl-[71px]">
        <svg width="15" height="14" viewBox="0 0 15 14" className="mr-[6px]">
          <ellipse cx="9" cy="7" rx="5" ry="4" fill="none" stroke="#6e6e6e" />
          <path d="M2.500 1v12M1 1.500h3M1 12.500h3M4 13.500h10" stroke="#6e6e6e" />
        </svg>
        <DisabledDd />
      </div>
      <div className="flex items-center mt-[15px] pl-[9px]">
        <div className="w-[195px] h-[19px] bg-[linear-gradient(90deg,#fff_0%,#9a9a9a_55%,#000_100%)] border border-[#3a3a3a]" />
        <svg width="12" height="13" viewBox="0 0 12 13" className="ml-[12px]">
          <path d="M0 2.500h12M3 2.500V1h6v1.500M2 3v10h8V3M4.500 5v6M7.500 5v6" fill="none" stroke="#666" />
        </svg>
      </div>
      <div className="flex items-center mt-[27px]">
        <DimLabel cls="w-[87px]">Opaklık:</DimLabel>
        <div className="ml-[5px]"><DisabledDd /></div>
      </div>
      <div className="flex items-center mt-[8px]">
        <DimLabel cls="w-[87px]">Konum:</DimLabel>
        <div className="ml-[5px]"><DisabledDd /></div>
      </div>
      <Corners />
    </div>
    <div className="h-[3px]" />
    <div className="h-[17px] shrink-0 flex bg-[#343434] text-[10px] font-bold tracking-[0.35px]">
      <div className="px-[6px] flex items-center bg-[#484848] text-[#d6d6d6]">Kitaplıklar</div>
      <div className="px-[7px] flex items-center bg-[#3d3d3d] text-[#808080] border-x border-[#2d2d2d]">Görünüm</div>
      <div className="px-[7px] flex items-center bg-[#3d3d3d] text-[#808080] border-r border-[#2d2d2d]">Grafik Stilleri</div>
    </div>
    <div className="h-[3px]" />
    <PanelHead tabs={['Katmanlar', 'Çalışma Yüzeyleri']} />
    <div className="flex-1 flex flex-col bg-[#484848]">
      <div className="mx-[5px] mt-[6px] h-[127px] bg-[#414141] border border-[#2a2a2a]">
        <div className="relative h-[20px] flex items-center bg-[#59647a] border-b border-[#2f2f2f]">
          <div className="w-[21px] h-full flex items-center justify-center border-r border-[#3c4352]">
            <svg width="14" height="9" viewBox="0 0 14 9">
              <path d="M0 4.500C3 0 11 0 14 4.500 11 9 3 9 0 4.500z" fill="#c8c8c8" />
              <circle cx="7" cy="4.500" r="2" fill="#59647a" />
            </svg>
          </div>
          <div className="w-[20px] h-full border-r border-[#3c4352]" />
          <div className="ml-[1px] w-[4px] h-full bg-[#4f6fd8]" />
          <div className="ml-[1px] w-px h-full bg-[#3c4352]" />
          <svg width="6" height="9" viewBox="0 0 6 9" className="ml-[5px]"><path d="M0 0v9l6-4.500z" fill="#e0e0e0" /></svg>
          <div className="ml-[8px] flex w-[18px] h-[18px] border border-black bg-[#17a398]">
            <div className="ml-[4px] w-[8px] relative bg-white">
              <div className="absolute bottom-0 left-0 w-full h-[5px] bg-black" />
            </div>
          </div>
          <span className="ml-[5px] text-[10px] font-bold text-[#e4e4e4]">katman 1</span>
          <div className="ml-auto h-full w-px bg-[#3c4352]" />
          <div className="ml-[6px] w-[10px] h-[10px] rounded-full border border-[#aab] bg-[#59647a]" />
          <div className="ml-[7px] mr-[9px] w-[6px] h-[6px] bg-[#3b5fe0] border border-white" />
          <svg width="6" height="6" viewBox="0 0 6 6" className="absolute right-0 top-0"><path d="M0 0h6v6z" fill="#ddd" /></svg>
        </div>
      </div>
      <div className="flex items-center h-[19px] pl-[4px] text-[10px] font-bold text-[#cfcfcf]">
        <span className="w-[85px]">1 Katman</span>
        <Foot cls="ml-[5px]"><circle cx="9" cy="6" r="4.500" /><path d="M6 9l-4 4" strokeWidth="1.300" /></Foot>
        <Foot cls="ml-[9px]"><rect x="2.500" y="2.500" width="8" height="8" /><rect x="6.500" y="6.500" width="7" height="6" fill="#6a6a6a" /></Foot>
        <Foot cls="ml-[11px]"><path d="M1 3h3l2 2M7 3h8v9H9V8H6" fill="#bbb" stroke="#bbb" /></Foot>
        <Foot cls="ml-[10px]"><path d="M4 1h10v11H8V8H4z" fill="#c0c0c0" stroke="none" /><path d="M1.500 7.500h5v5h-5z" stroke="#888" /></Foot>
        <Foot cls="ml-[9px]"><path d="M3 3.500h10M6 3V1.500h4V3M4.500 3.500v9h7v-9M6.500 5v6M9.500 5v6" stroke="#666" /></Foot>
      </div>
    </div>
  </div>
)

const Cursor = () => (
  <svg width="14" height="22" viewBox="0 0 14 22" className="absolute left-[786px] top-[702px]">
    <path d="M0 0v16l4-4 3 6 3-1-3-6h6z" fill="#000" />
    <path d="M6 17h1M9 17h1M8 19h1M10 19h1M7 20h1M10 21h1" stroke="#fff" />
  </svg>
)

export default function App() {
  return (
    <div className="relative w-[1366px] h-[726px] overflow-hidden flex flex-col bg-[#484848] font-['Roboto',sans-serif]">
      <MenuBar />
      <ControlBar />
      <div className="flex-1 flex min-h-0 bg-[#2d2d2d]">
        <LeftTools />
        <DocArea />
        <ColumnOne />
        <ColumnTwo />
      </div>
      <Cursor />
    </div>
  )
}
